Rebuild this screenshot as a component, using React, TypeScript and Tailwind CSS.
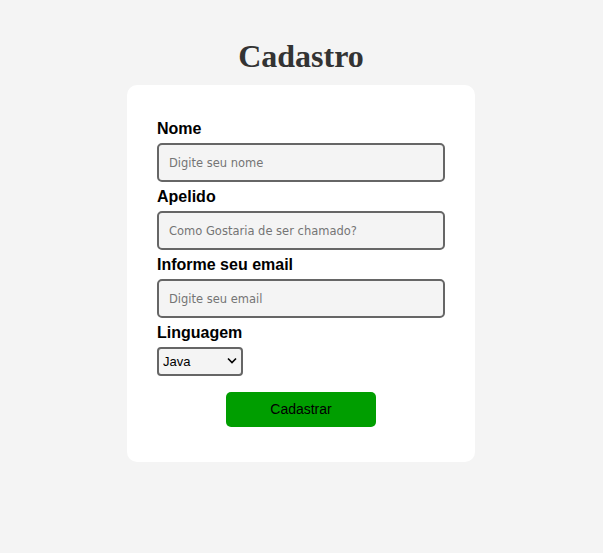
export default function App() {
  return (
    <div className="min-h-[553px] bg-[#f4f4f4] pt-[38px] pr-px font-['Liberation_Sans',Arial,sans-serif]">
      {/* TITULO */}
      <h1 className="text-center font-['Liberation_Serif',serif] text-[32px] font-bold leading-[37px] text-[#333]">
        Cadastro
      </h1>

      {/* FORMULARIO */}
      <form
        className="mx-auto mt-[10px] flex w-[348px] flex-col rounded-[10px] bg-white px-[30px] pt-[34px] pb-[35px]"
        onSubmit={(e) => e.preventDefault()}
      >
        <label className="text-[16px] font-bold leading-[19px] text-black">Nome</label>
        <input
          type="text"
          placeholder="Digite seu nome"
          className="mt-[5px] mb-[5px] h-[39px] rounded-[5px] border-2 border-[#666] bg-[#f4f4f4] px-[10px] font-['DejaVu_Sans',sans-serif] text-[11.5px] placeholder:text-[#757575]"
        />

        <label className="text-[16px] font-bold leading-[19px] text-black">Apelido</label>
        <input
          type="text"
          placeholder="Como Gostaria de ser chamado?"
          className="mt-[5px] mb-[5px] h-[39px] rounded-[5px] border-2 border-[#666] bg-[#f4f4f4] px-[10px] font-['DejaVu_Sans',sans-serif] text-[11.5px] placeholder:text-[#757575]"
        />

        <label className="text-[16px] font-bold leading-[19px] text-black">Informe seu email</label>
        <input
          type="email"
          placeholder="Digite seu email"
          className="mt-[5px] mb-[5px] h-[39px] rounded-[5px] border-2 border-[#666] bg-[#f4f4f4] px-[10px] font-['DejaVu_Sans',sans-serif] text-[11.5px] placeholder:text-[#757575]"
        />

        <label className="text-[16px] font-bold leading-[19px] text-black">Linguagem</label>
        <div className="relative mt-[5px] h-[29px] w-[86px]">
          <select
            defaultValue="java"
            className="h-full w-full appearance-none rounded-[4px] border-2 border-[#666] bg-[#f4f4f4] pl-[4px] text-[13px] text-black"
          >
            <option value="java">Java</option>
            <option value="python">Python</option>
            <option value="js">JavaScript</option>
          </select>
          <svg
            className="pointer-events-none absolute right-[6px] top-[10px]"
            width="10"
            height="7"
            viewBox="0 0 10 7"
          >
            <path d="M1 1.5 L5 5.5 L9 1.5" fill="none" stroke="#000" strokeWidth="1.6" />
          </svg>
        </div>

        <button
          type="submit"
          className="mx-auto mt-[16px] h-[35px] w-[150px] rounded-[5px] bg-[#009e00] text-[14px] text-black"
        >
          Cadastrar
        </button>
      </form>
    </div>
  );
}
